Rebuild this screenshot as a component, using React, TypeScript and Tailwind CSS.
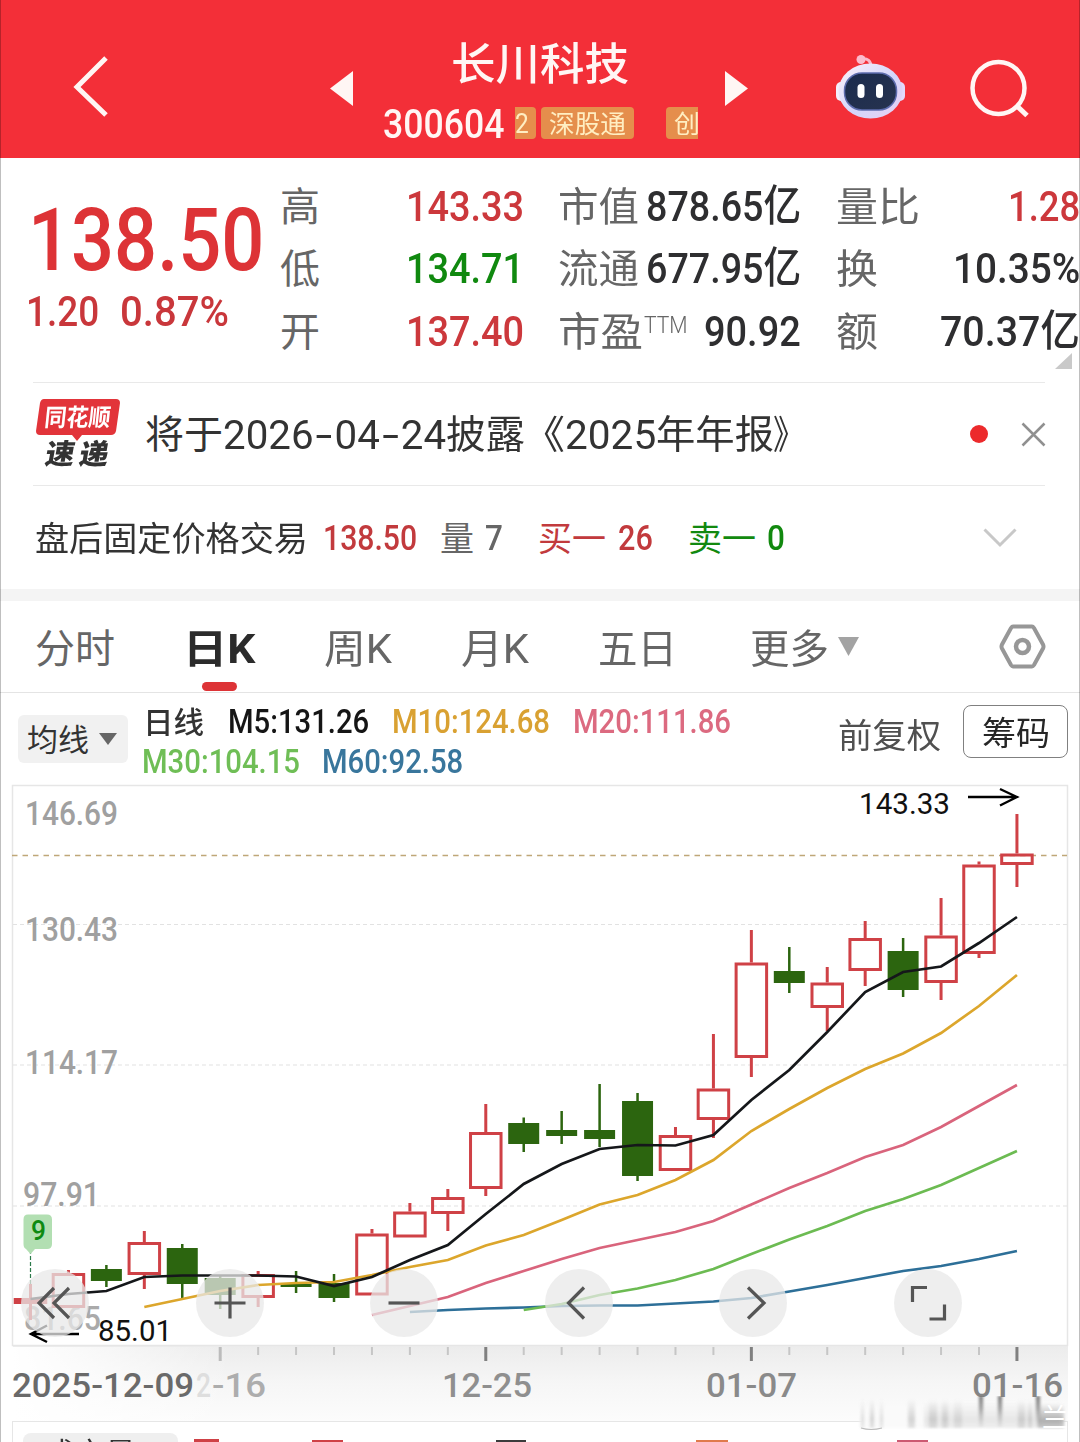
import { useLayoutEffect, useRef, type ReactNode } from "react";
import clsx from "clsx";

const STEP = 37.94;
const cx = (i: number) => 30.5 + STEP * i;

type Candle = { up: boolean; high: number; top: number; bottom: number; low: number };

const c = (up: boolean, high: number, top: number, bottom: number, low: number): Candle => ({
  up,
  high,
  top,
  bottom,
  low,
});

const candles: Candle[] = [
  c(true, 1284, 1298, 1304, 1320),
  c(true, 1270, 1273, 1308, 1308),
  c(false, 1265, 1269, 1281, 1287),
  c(true, 1231, 1242, 1275, 1289),
  c(false, 1244, 1248, 1284, 1298),
  c(false, 1275, 1278, 1295, 1309),
  c(true, 1271, 1274, 1298, 1307),
  c(false, 1271, 1284, 1287, 1293),
  c(false, 1274, 1283, 1298, 1302),
  c(true, 1229, 1233.5, 1295.5, 1295.5),
  c(true, 1203, 1211.5, 1237.5, 1237.5),
  c(true, 1189, 1197, 1214, 1231),
  c(true, 1104, 1132, 1189, 1196),
  c(false, 1117.5, 1123, 1144, 1152),
  c(false, 1111, 1130, 1136, 1144),
  c(false, 1084, 1130, 1139, 1147),
  c(false, 1093, 1101, 1176, 1181),
  c(true, 1127, 1135, 1171, 1171),
  c(true, 1034, 1088.5, 1120, 1138),
  c(true, 930, 962.5, 1058, 1077),
  c(false, 947, 971, 983, 993),
  c(true, 967, 982.5, 1008, 1031),
  c(true, 921, 938, 971, 986),
  c(false, 938, 951, 990, 997),
  c(true, 898, 935.5, 983, 1000),
  c(true, 861.5, 864.5, 954, 958),
  c(true, 814, 853.5, 865, 887),
];

const averages = [
  { color: "#2d6f98", start: 10, ys: [1312, 1310, 1308.5, 1307.5, 1306, 1305.5, 1305.5, 1303.5, 1301.5, 1298, 1291.5, 1285, 1278, 1271, 1266, 1259, 1251] },
  { color: "#6cbb52", start: 13, ys: [1310, 1304, 1295, 1288.5, 1280, 1269, 1254, 1239.5, 1226, 1211, 1199, 1185, 1168, 1151] },
  { color: "#d9647c", start: 9, ys: [1315, 1306, 1297, 1283, 1271, 1259, 1248, 1240, 1232, 1221, 1204.5, 1188, 1173, 1157, 1145, 1127, 1106, 1085] },
  { color: "#dca62c", start: 3, ys: [1307, 1299, 1291, 1285, 1283, 1282, 1275, 1267, 1260, 1245.5, 1235, 1220, 1204.5, 1195, 1180, 1160, 1131, 1109, 1088, 1069, 1053.5, 1033, 1006, 975] },
  { color: "#15171a", start: 0, ys: [1299, 1294, 1291, 1277, 1275.5, 1275.5, 1275.5, 1276.5, 1286, 1277, 1260, 1245, 1214, 1184, 1164, 1149, 1145, 1145.5, 1135, 1100, 1070, 1032, 992, 972, 966.5, 943, 917] },
];

// Squeezes or stretches one line of text to the width of its box
function Fit({ className, children }: { className?: string; children: ReactNode }) {
  const boxRef = useRef<HTMLSpanElement>(null);
  const textRef = useRef<HTMLSpanElement>(null);

  useLayoutEffect(() => {
    const box = boxRef.current;
    const text = textRef.current;
    if (!box || !text) return;
    text.style.transform = `scaleX(${box.clientWidth / text.offsetWidth})`;
  }, [children]);

  return (
    <span ref={boxRef} className={clsx("block shrink-0 leading-none", className)}>
      <span ref={textRef} className="inline-block origin-left whitespace-nowrap">
        {children}
      </span>
    </span>
  );
}

function Dash() {
  return <span className="mx-[5px] inline-block scale-x-150">-</span>;
}

function Robot() {
  return (
    <svg className="mt-[54px] ml-[87px] h-[66px] w-[71px] shrink-0" viewBox="0 0 71 66">
      <defs>
        <linearGradient id="shell" x1="0" y1="0" x2="1" y2="1">
          <stop offset="0" stopColor="#fdf3fa" />
          <stop offset="0.55" stopColor="#d3d5fb" />
          <stop offset="1" stopColor="#ead0f2" />
        </linearGradient>
        <linearGradient id="visor" x1="0" y1="0" x2="1" y2="1">
          <stop offset="0" stopColor="#1b2b4d" />
          <stop offset="1" stopColor="#27334f" />
        </linearGradient>
      </defs>
      <path d="M26 5 C33 4 36 7 36 13" fill="none" stroke="#f9b9cb" strokeWidth="3" />
      <circle cx="26" cy="5.500" r="4.500" fill="#fbbccd" />
      <rect x="1" y="28" width="10" height="19" rx="5" fill="#f4effc" />
      <rect x="60" y="28" width="10" height="19" rx="5" fill="#e3d9fb" />
      <ellipse cx="35.500" cy="37" rx="32" ry="27.500" fill="url(#shell)" />
      <rect x="9.500" y="19" width="52" height="37" rx="17.500" fill="url(#visor)" stroke="#5d6cae" strokeWidth="1.500" />
      <rect x="22.500" y="30" width="7" height="14" rx="3.500" fill="#fff" />
      <rect x="41" y="30" width="7" height="14" rx="3.500" fill="#fff" />
    </svg>
  );
}

function Header() {
  return (
    <header className="flex h-[158px] shrink-0 items-start bg-[#f32f38] text-[#fff6f4]">
      <svg className="mt-[55px] ml-[72px] h-16 w-[38px] shrink-0" viewBox="0 0 38 64" fill="none" stroke="currentColor" strokeWidth="5">
        <path d="M34 3 L5 32 L34 60" />
      </svg>
      <svg className="mt-[71px] ml-[220px] h-[35px] w-[23px] shrink-0" viewBox="0 0 23 35" fill="currentColor">
        <path d="M23 0 V35 L0 17.500Z" />
      </svg>
      <div className="ml-[30px] w-[315px] shrink-0 pt-[43px]">
        <Fit className="ml-[68px] w-[178px] text-[44px] font-medium">长川科技</Fit>
        <div className="mt-[17px] flex items-start overflow-hidden">
          <Fit className="mt-px w-[121px] text-[40px] font-medium">300604</Fit>
          <div className="mt-[3px] ml-[11px] h-8 w-[21px] shrink-0 rounded-r bg-[#e58e4c] pt-[3px]">
            <Fit className="w-[14px] text-[28px] text-[#ffeec2]">2</Fit>
          </div>
          <div className="mt-[3px] ml-[5px] h-8 w-[93px] shrink-0 rounded bg-[#e58e4c] pt-[5px] pl-2">
            <Fit className="w-[77px] text-[25px] text-[#ffeec2]">深股通</Fit>
          </div>
          <div className="mt-[3px] ml-8 h-8 w-8 shrink-0 overflow-hidden rounded-l bg-[#e58e4c] pt-[5px] pl-2">
            <Fit className="w-[26px] text-[25px] text-[#ffeec2]">创</Fit>
          </div>
        </div>
      </div>
      <svg className="mt-[71px] ml-[27px] h-[35px] w-[23px] shrink-0" viewBox="0 0 23 35" fill="currentColor">
        <path d="M0 0 V35 L23 17.500Z" />
      </svg>
      <Robot />
      <svg className="mt-[59px] ml-[64px] h-[60px] w-[60px] shrink-0" viewBox="0 0 60 60" fill="none" stroke="currentColor" strokeWidth="4.500">
        <circle cx="28.500" cy="29" r="26" />
        <path d="M46.500 46.500 L57 56.500" strokeWidth="5" />
      </svg>
    </header>
  );
}

function Stat({ label, value }: { label: ReactNode; value: ReactNode }) {
  return (
    <div className="flex h-[62.500px] items-center justify-between text-[#666]">
      <div className="pt-[3px]">{label}</div>
      {value}
    </div>
  );
}

function Quote() {
  return (
    <section className="relative flex h-[224px] shrink-0 pt-[17px] text-[43px] font-medium text-[#2e2e30]">
      <div className="w-[280px] shrink-0 text-[#dd3336]">
        <Fit className="mt-[22px] ml-[28px] w-[236px] text-[87px]">138.50</Fit>
        <div className="mt-[6px] flex pl-[26px] text-[#c9373b]">
          <Fit className="w-[73px]">1.20</Fit>
          <Fit className="ml-[21px] w-[109px]">0.87%</Fit>
        </div>
      </div>
      <div className="w-[244px] shrink-0">
        <Stat
          label={<Fit className="w-10 text-[40px] font-normal">高</Fit>}
          value={<Fit className="w-[118px] text-[#cc383c]">143.33</Fit>}
        />
        <Stat
          label={<Fit className="w-10 text-[40px] font-normal">低</Fit>}
          value={<Fit className="w-[118px] text-[#10890f]">134.71</Fit>}
        />
        <Stat
          label={<Fit className="w-10 text-[40px] font-normal">开</Fit>}
          value={<Fit className="w-[118px] text-[#cc383c]">137.40</Fit>}
        />
      </div>
      <div className="ml-[34px] w-[243px] shrink-0">
        <Stat
          label={<Fit className="w-[81px] text-[40px] font-normal">市值</Fit>}
          value={<Fit className="w-[155px] text-[#2e2e30]">878.65亿</Fit>}
        />
        <Stat
          label={<Fit className="w-[81px] text-[40px] font-normal">流通</Fit>}
          value={<Fit className="w-[155px] text-[#2e2e30]">677.95亿</Fit>}
        />
        <Stat
          label={
            <div className="flex">
              <Fit className="w-[85px] text-[40px] font-normal">市盈</Fit>
              <Fit className="mt-px ml-px w-[44px] text-[23px] font-light">TTM</Fit>
            </div>
          }
          value={<Fit className="w-[97px] text-[#2e2e30]">90.92</Fit>}
        />
      </div>
      <div className="ml-[35px] w-[244px] shrink-0">
        <Stat
          label={<Fit className="w-[84px] text-[40px] font-normal">量比</Fit>}
          value={<Fit className="w-[72px] text-[#cc383c]">1.28</Fit>}
        />
        <Stat
          label={<Fit className="w-[42px] text-[40px] font-normal">换</Fit>}
          value={<Fit className="w-[127px] text-[#2e2e30]">10.35%</Fit>}
        />
        <Stat
          label={<Fit className="w-[42px] text-[40px] font-normal">额</Fit>}
          value={<Fit className="w-[140px] text-[#2e2e30]">70.37亿</Fit>}
        />
      </div>
      <svg className="absolute top-[195px] right-[8px] h-4 w-[17px]" viewBox="0 0 17 16" fill="#c9c9c9">
        <path d="M17 0 V16 H0Z" />
      </svg>
    </section>
  );
}

function News() {
  return (
    <section className="mr-[35px] ml-[33px] flex h-[103px] shrink-0 items-center border-t border-[#e9e9e9] text-[#333]">
      <div className="ml-[3px] h-[70px] w-[84px] shrink-0">
        <div className="relative h-[36px]">
          <svg className="absolute inset-0 h-[42px] w-[84px]" viewBox="0 0 84 42" fill="#e2343a">
            <path d="M8 0 H80 Q84 0 84 4 L80 32 Q79 36 75 36 H46 L41 42 L36 36 H4 Q0 36 0 32 L4 4 Q5 0 8 0Z" />
          </svg>
          <div className="relative flex -skew-x-6 pt-[7px] pl-[9px]">
            <Fit className="w-[66px] text-[24px] font-bold text-white">同花顺</Fit>
          </div>
        </div>
        <div className="flex -skew-x-10 gap-[5px] pt-[6px] pl-[10px] font-black">
          <Fit className="w-[29px] text-[28px]">速</Fit>
          <Fit className="w-[29px] text-[28px]">递</Fit>
        </div>
      </div>
      <div className="mt-[3px] ml-[25px] flex items-center text-[39px]">
        <Fit className="w-[78px]">将于</Fit>
        <Fit className="w-[223px] text-[41px]">
          2026
          <Dash />
          04
          <Dash />
          24
        </Fit>
        <Fit className="w-[79px]">披露</Fit>
        <Fit className="-ml-[3px] w-[43px]">《</Fit>
        <Fit className="w-[91px] text-[41px]">2025</Fit>
        <Fit className="w-[118px]">年年报</Fit>
        <Fit className="-ml-px w-[32px]">》</Fit>
      </div>
      <div className="mr-[33px] ml-auto size-[18px] rounded-full bg-[#ec2a2c]" />
      <svg className="-mr-px size-[25px]" viewBox="0 0 25 25" fill="none" stroke="#909090" strokeWidth="2.500">
        <path d="M1.500 1.500 L23.500 23.500 M23.500 1.500 L1.500 23.500" />
      </svg>
    </section>
  );
}

function AfterHours() {
  return (
    <section className="mr-[35px] ml-[33px] flex h-[104px] shrink-0 items-center border-t border-[#e9e9e9] text-[35px] font-medium">
      <Fit className="mt-[3px] ml-0.5 w-[273px] text-[34px] font-normal text-[#333]">盘后固定价格交易</Fit>
      <Fit className="mt-0.5 ml-[15px] w-[94px] text-[#c23a3d]">138.50</Fit>
      <Fit className="mt-[3px] ml-[23px] w-[34px] text-[34px] font-normal text-[#666]">量</Fit>
      <Fit className="mt-0.5 ml-[11px] w-[18px] text-[#666]">7</Fit>
      <Fit className="mt-[3px] ml-[35px] w-[68px] text-[34px] font-normal text-[#c23a3d]">买一</Fit>
      <Fit className="mt-0.5 ml-[12px] w-[35px] text-[#c23a3d]">26</Fit>
      <Fit className="mt-[3px] ml-[35px] w-[68px] text-[34px] font-normal text-[#12890f]">卖一</Fit>
      <Fit className="mt-0.5 ml-[11px] w-[18px] text-[#12890f]">0</Fit>
      <svg className="mr-[28px] ml-auto h-[20px] w-[34px]" viewBox="0 0 34 20" fill="none" stroke="#c8c8c8" strokeWidth="3">
        <path d="M1.500 1.500 L17 17 L32.500 1.500" />
      </svg>
    </section>
  );
}

function Tabs() {
  return (
    <nav className="flex h-[92px] shrink-0 items-center border-b border-[#e4e4e4] text-[40px] text-[#666]">
      <Fit className="mt-[7px] ml-[35px] w-[80px]">分时</Fit>
      <div className="relative mt-[7px] ml-[68px] shrink-0">
        <Fit className="w-[72px] font-bold text-[#2b2b2b]">日K</Fit>
        <div className="absolute top-[52px] left-[19px] h-[9px] w-[35px] rounded-full bg-[#dd3336]" />
      </div>
      <Fit className="mt-[7px] ml-[69px] w-[68px]">周K</Fit>
      <Fit className="mt-[7px] ml-[69px] w-[68px]">月K</Fit>
      <Fit className="mt-[7px] ml-[69px] w-[79px]">五日</Fit>
      <Fit className="mt-[7px] ml-[73px] w-[79px]">更多</Fit>
      <svg className="ml-[9px] h-[19px] w-[21px] shrink-0" viewBox="0 0 21 19" fill="#a3a3a3">
        <path d="M0 0 H21 L10.500 19Z" />
      </svg>
      <svg className="ml-[140px] h-[45px] w-[47px] shrink-0" viewBox="0 0 47 45" fill="none" stroke="#979797" strokeWidth="4">
        <path d="M14 2.500 H33 Q34 2.500 35 4 L44 20.500 Q45 22.500 44 24.500 L35 41 Q34 42.500 33 42.500 H14 Q13 42.500 12 41 L3 24.500 Q2 22.500 3 20.500 L12 4 Q13 2.500 14 2.500Z" />
        <circle cx="23.500" cy="22.500" r="6.500" strokeWidth="4.500" />
      </svg>
    </nav>
  );
}

function Indicators() {
  return (
    <section className="flex h-[91px] shrink-0 items-start text-[33px] font-medium">
      <div className="mt-[22px] ml-[18px] flex h-12 w-[110px] shrink-0 items-center rounded-md bg-[#f1f1f1]">
        <Fit className="mt-[3px] ml-[9px] w-[62px] text-[31px] font-normal text-[#333]">均线</Fit>
        <svg className="ml-[10px] h-3 w-[18px]" viewBox="0 0 18 12" fill="#666">
          <path d="M0 0 H18 L9 12Z" />
        </svg>
      </div>
      <div className="ml-[15px] w-[690px] shrink-0 pt-[12px]">
        <div className="flex">
          <Fit className="mt-[3px] w-[61px] text-[30px] text-[#333]">日线</Fit>
          <Fit className="ml-[24px] w-[141px] text-[#151515]">M5:131.26</Fit>
          <Fit className="ml-[23px] w-[158px] text-[#d9a132]">M10:124.68</Fit>
          <Fit className="ml-[23px] w-[158px] text-[#dc6a80]">M20:111.86</Fit>
        </div>
        <div className="-ml-px flex pt-[7px]">
          <Fit className="w-[158px] text-[#6fbe56]">M30:104.15</Fit>
          <Fit className="ml-[22px] w-[141px] text-[#39769c]">M60:92.58</Fit>
        </div>
      </div>
      <Fit className="mt-[26px] ml-[5px] w-[103px] text-[34px] font-normal text-[#505050]">前复权</Fit>
      <div className="mt-[12px] ml-[22px] flex h-[53px] w-[105px] shrink-0 items-center justify-center rounded-lg border border-[#808080]">
        <Fit className="mt-[3px] w-[68px] text-[33px] font-normal text-[#262626]">筹码</Fit>
      </div>
    </section>
  );
}

type LabelProps = { x: number; y: number; w: number; size?: number; fill: string; weight?: number; children: string };

function Label({ x, y, w, size = 34, fill, weight = 500, children }: LabelProps) {
  return (
    <text x={x} y={y} textLength={w} lengthAdjust="spacingAndGlyphs" fontSize={size} fontWeight={weight} fill={fill}>
      {children}
    </text>
  );
}

function CandleShape({ x, data }: { x: number; data: Candle }) {
  const color = data.up ? "#cf4146" : "#2c650f";
  if (!data.up) {
    return (
      <g fill={color}>
        <rect x={x - 1.25} y={data.high} width="2.500" height={data.low - data.high} />
        <rect x={x - 15.5} y={data.top} width="31" height={data.bottom - data.top} />
      </g>
    );
  }
  return (
    <g fill={color}>
      <rect x={x - 1.5} y={data.high} width="3" height={data.top - data.high} />
      <rect x={x - 1.5} y={data.bottom} width="3" height={data.low - data.bottom} />
      <rect x={x - 15.25} y={data.top + 1.5} width="30.500" height={data.bottom - data.top - 3} fill="none" stroke={color} strokeWidth="3" />
    </g>
  );
}

function Chart() {
  return (
    <svg className="block h-[637px] w-[1080px]" viewBox="0 784 1080 637">
      <defs>
        <linearGradient id="axis" x1="0" y1="0" x2="0" y2="1">
          <stop offset="0" stopColor="#ececec" />
          <stop offset="0.5" stopColor="#f6f6f6" />
          <stop offset="1" stopColor="#fcfcfc" />
        </linearGradient>
        <linearGradient id="axisFade" x1="0" y1="0" x2="1" y2="0">
          <stop offset="0" stopColor="#fff" />
          <stop offset="1" stopColor="#fff" stopOpacity="0" />
        </linearGradient>
      </defs>

      <rect x="13" y="1346" width="1055" height="75" fill="url(#axis)" />
      <rect x="12" y="1347" width="220" height="74" fill="url(#axisFade)" />
      <rect x="12.500" y="785.500" width="1055" height="560" fill="none" stroke="#e6e6e6" strokeWidth="1.500" />

      {[924.5, 1065, 1206].map((y) => (
        <path key={y} d={`M13 ${y} H1067`} stroke="#e2e2e2" strokeWidth="1.200" strokeDasharray="4 3" />
      ))}
      <path d="M12 855.500 H1067" stroke="#bfa778" strokeWidth="1.500" strokeDasharray="5.500 5" />

      <Label x={25} y={825} w={93} fill="#a0a0a0">146.69</Label>
      <Label x={25} y={941} w={93} fill="#a0a0a0">130.43</Label>
      <Label x={25} y={1074} w={93} fill="#a0a0a0">114.17</Label>
      <Label x={23} y={1206} w={77} fill="#a0a0a0">97.91</Label>
      <Label x={24} y={1330} w={77} fill="#aaa">81.65</Label>

      <rect x="14" y="1298" width="26" height="6" fill="#cf4146" />
      {candles.map((item, i) => (
        <CandleShape key={i} x={cx(i)} data={item} />
      ))}
      {averages.map((line) => (
        <polyline
          key={line.color}
          points={line.ys.map((y, i) => `${cx(line.start + i)},${y}`).join(" ")}
          fill="none"
          stroke={line.color}
          strokeWidth="2.700"
        />
      ))}

      <Label x={859} y={814} w={91} size={29} weight={400} fill="#111">143.33</Label>
      <path d="M968 797 H1016 M1000 789 L1017 797 L1000 805.500" fill="none" stroke="#000" strokeWidth="2.400" />
      <Label x={98} y={1341} w={74} size={29} weight={400} fill="#111">85.01</Label>
      <path d="M79 1334 H31 M47 1325.500 L31 1334 L47 1342" fill="none" stroke="#000" strokeWidth="2.400" />

      <path d="M30.500 1250 V1284" stroke="#2c7a4a" strokeWidth="1.200" strokeDasharray="4 2" />
      <path d="M28 1214.500 H47 Q52 1214.500 52 1219.500 V1244 Q52 1249 47 1249 H35 L30.500 1254 L26 1249 Q23.500 1248 23.500 1244 V1219.500 Q23.500 1214.500 28 1214.500Z" fill="#b2dfb2" />
      <Label x={31} y={1240} w={15} size={27} fill="#0d8a12">9</Label>

      {candles.slice(5).map((_, i) => {
        const major = i % 7 === 0;
        return (
          <rect
            key={i}
            x={cx(i + 5) - (major ? 1.5 : 1)}
            y="1347"
            width={major ? 3 : 2}
            height={major ? 14 : 8}
            fill={major ? (i === 0 ? "#bcbcbc" : "#808080") : "#c6c6c6"}
          />
        );
      })}
      <Label x={196} y={1397} w={15} fill="#dedede">2</Label>
      <Label x={212} y={1397} w={54} fill="#adadad">-16</Label>
      <Label x={12} y={1397} w={182} fill="#6a6a6a">2025-12-09</Label>
      <Label x={442} y={1397} w={90} fill="#8f8f8f">12-25</Label>
      <Label x={706} y={1397} w={91} fill="#8a8a8a">01-07</Label>
      <Label x={972} y={1397} w={91} fill="#858585">01-16</Label>
    </svg>
  );
}

const controls = [
  { name: "first", d: "M33 19 L18 34 L33 49 M48 19 L33 34 L48 49" },
  { name: "zoom in", d: "M18.500 34 H49.500 M34 18.500 V49.500" },
  { name: "zoom out", d: "M18.500 34 H49.500" },
  { name: "previous", d: "M39 18.500 L23.500 34 L39 49.500" },
  { name: "next", d: "M29 18.500 L45 34 L29 49.500" },
  { name: "fullscreen", d: "M33 18.500 H18.500 V33 M50.500 35.500 V50 H35.500" },
];

function Controls() {
  return (
    <div className="absolute top-[485px] left-[21px] flex w-[941px] justify-between">
      {controls.map(({ name, d }) => (
        <button key={name} aria-label={name} className="size-[68px] rounded-full bg-[#e8e8e8]/75">
          <svg className="size-[68px]" viewBox="0 0 68 68" fill="none" stroke="#555" strokeWidth="3.200">
            <path d={d} />
          </svg>
        </button>
      ))}
    </div>
  );
}

function Smudge() {
  const bars = [
    { x: 3, w: 3, o: 0.3 },
    { x: 12, w: 4, o: 0.4 },
    { x: 22, w: 3, o: 0.3 },
    { x: 50, w: 7, o: 0.4 },
    { x: 71, w: 8, o: 0.35 },
    { x: 84, w: 6, o: 0.35 },
    { x: 96, w: 8, o: 0.25 },
    { x: 160, w: 7, o: 0.35 },
    { x: 170, w: 4, o: 0.35 },
  ];
  return (
    <svg className="absolute right-[10px] bottom-[10px] h-[36px] w-[212px]" viewBox="0 0 212 36">
      <defs>
        <linearGradient id="drip" x1="0" y1="0" x2="0" y2="1">
          <stop offset="0" stopColor="#777" />
          <stop offset="0.4" stopColor="#888" stopOpacity="0.800" />
          <stop offset="1" stopColor="#ccc" stopOpacity="0.300" />
        </linearGradient>
        <linearGradient id="haze" x1="0" y1="0" x2="0" y2="1">
          <stop offset="0" stopColor="#999" stopOpacity="0" />
          <stop offset="0.7" stopColor="#999" />
          <stop offset="1" stopColor="#999" stopOpacity="0.600" />
        </linearGradient>
        <filter id="soft">
          <feGaussianBlur stdDeviation="1.500 1" />
        </filter>
      </defs>
      <rect x="2" y="10" width="204" height="22" fill="#fafafa" filter="url(#soft)" />
      <g filter="url(#soft)">
        <rect x="66" y="5" width="136" height="27" fill="url(#haze)" opacity="0.200" />
        {bars.map((bar) => (
          <rect key={bar.x} x={bar.x} y="3" width={bar.w} height="29" fill="url(#haze)" opacity={bar.o} />
        ))}
        {[121, 140, 178].map((x) => (
          <rect key={x} x={x} y="0" width="4" height="31" fill="url(#drip)" />
        ))}
        <rect x="180" y="8" width="26" height="24" fill="url(#haze)" opacity="0.700" />
      </g>
      <path d="M3 32 Q13 35 24 32" fill="none" stroke="#bbb" strokeWidth="1.200" />
      <text x="184" y="31" fontSize="26" fill="#fff">兰</text>
    </svg>
  );
}

function VolumeStrip() {
  return (
    <section className="relative h-[21px] shrink-0">
      <div className="mx-3 flex h-full items-start overflow-hidden border-x border-t border-[#e6e6e6]">
        <div className="mt-[11px] ml-[10px] h-12 w-[155px] shrink-0 rounded-lg bg-[#efefef] pt-[6px] pl-[21px]">
          <Fit className="w-[92px] text-[31px] text-[#333]">成交量</Fit>
        </div>
        <div className="mt-[17px] ml-[16px] h-8 w-[25px] shrink-0 border-[3px] border-[#cf4146]" />
        <div className="mt-[18px] ml-[93px] h-8 w-[31px] shrink-0 bg-[#cf4146]" />
        <div className="mt-[18px] ml-[153px] h-8 w-[30px] shrink-0 bg-[#3c3c3c]" />
        <div className="mt-[18px] ml-[170px] h-8 w-[32px] shrink-0 bg-[#e07a4c]" />
        <div className="mt-[18px] ml-[169px] h-8 w-[31px] shrink-0 bg-[#cc5a72]" />
      </div>
      <Smudge />
    </section>
  );
}

export default function App() {
  return (
    <main className="relative flex h-[1442px] w-[1080px] flex-col overflow-hidden bg-white font-[Roboto,'Noto_Sans_CJK_SC',sans-serif]">
      <Header />
      <Quote />
      <News />
      <AfterHours />
      <div className="h-3 shrink-0 bg-[#f4f4f4]" />
      <Tabs />
      <Indicators />
      <section className="relative h-[637px] shrink-0">
        <Chart />
        <Controls />
      </section>
      <VolumeStrip />
      <div className="pointer-events-none absolute inset-0 border-x border-black/25" />
    </main>
  );
}
